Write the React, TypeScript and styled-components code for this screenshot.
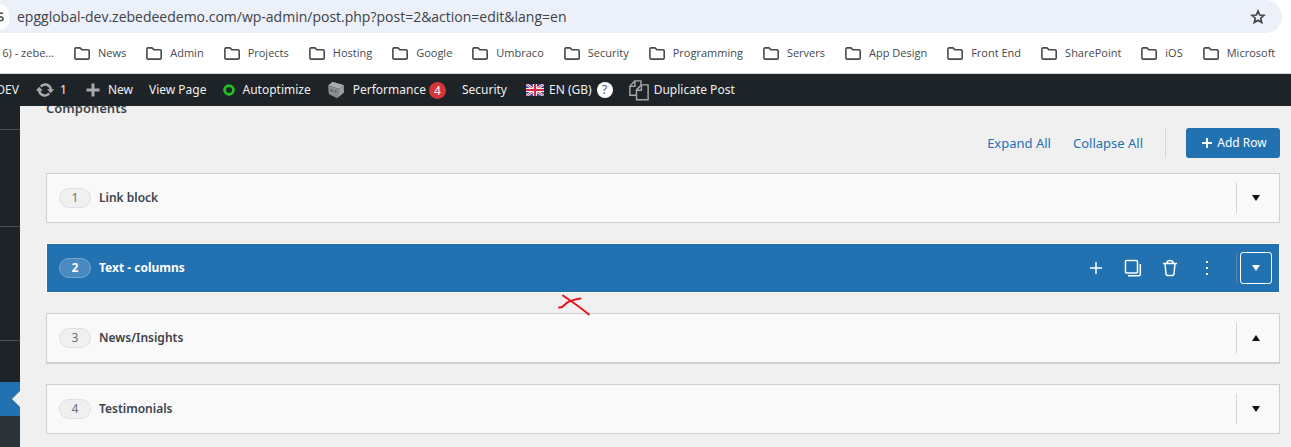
import React from "react";
import styled, { createGlobalStyle, css } from "styled-components";

const GlobalStyle = createGlobalStyle`
  * { box-sizing: border-box; }
  body {
    margin: 0;
    background: #f0f0f1;
    color: #3c434a;
    font-family: "Noto Sans", "Open Sans", "Liberation Sans", sans-serif;
    font-size: 12px;
    line-height: 20px;
  }
  button {
    font: inherit;
    color: inherit;
    background: none;
    border: 0;
    padding: 0;
    cursor: pointer;
  }
  a { color: inherit; text-decoration: none; }
  svg { display: block; flex: none; }
`;

const Page = styled.div`
  display: flex;
  flex-direction: column;
  min-height: 100vh;
  overflow: hidden;
`;

/* Browser chrome */

const AddressRow = styled.div`
  background: #fff;
  padding-right: 9px;
`;

const AddressBar = styled.div`
  display: flex;
  align-items: center;
  height: 33px;
  padding-right: 16px;
  background: #ebf0f9;
  border-radius: 0 17px 17px 0;
`;

const SiteInfo = styled.button`
  flex: none;
  width: 9px;
  height: 26px;
  background: #fff;
  border-radius: 0 13px 13px 0;
  color: #44474b;
`;

const UrlInput = styled.input`
  flex: 1;
  min-width: 0;
  margin-left: 8px;
  padding: 0;
  border: 0;
  outline: 0;
  background: transparent;
  color: #3f4247;
  font-family: "Open Sans", "Noto Sans", sans-serif;
  font-size: 14px;
`;

const Bookmarks = styled.nav`
  display: flex;
  align-items: center;
  gap: 20px;
  height: 41px;
  background: #fff;
  border-bottom: 1px solid #d5d7da;
  color: #46494d;
  font-family: "Open Sans", "Noto Sans", sans-serif;
  font-size: 11px;
  white-space: nowrap;
`;

const Bookmark = styled.a`
  display: flex;
  flex: none;
  align-items: center;
  gap: 8px;
`;

const ClippedBookmark = styled(Bookmark)`
  justify-content: flex-end;
  width: 54px;
`;

/* WordPress admin bar */

const AdminBar = styled.nav`
  display: flex;
  align-items: center;
  gap: 16px;
  height: 32px;
  background: #1d2327;
  color: #f0f0f1;
  white-space: nowrap;
`;

const AdminItem = styled.a<{ $gap?: number; $before?: number }>`
  display: flex;
  flex: none;
  align-items: center;
  gap: ${(p) => p.$gap ?? 8}px;
  margin-left: ${(p) => p.$before ?? 0}px;
`;

const ClippedAdminItem = styled(AdminItem)`
  justify-content: flex-end;
  width: 19px;
`;

const Labelled = styled.span`
  display: flex;
  align-items: center;
  gap: 3px;
`;

const Count = styled.span`
  width: 17px;
  height: 17px;
  border-radius: 9px;
  background: #d63638;
  color: #fff;
  line-height: 17px;
  text-align: center;
`;

const Help = styled.span`
  width: 16px;
  height: 16px;
  border-radius: 8px;
  background: #fff;
  color: #50575e;
  line-height: 16px;
  text-align: center;
`;

/* Body */

const Body = styled.div`
  display: flex;
  flex: 1;
  overflow: hidden;
`;

const Sidebar = styled.aside`
  display: flex;
  flex: none;
  flex-direction: column;
  width: 20px;
  background: #1d2327;
`;

const MenuGroup = styled.div<{ $height: number; $last?: boolean }>`
  height: ${(p) => p.$height}px;
  border-bottom: ${(p) => (p.$last ? "0" : "1px solid #4a5055")};
`;

const CurrentMenu = styled.div`
  display: flex;
  align-items: center;
  justify-content: flex-end;
  height: 34px;
  background: #2271b1;
`;

const Notch = styled.span`
  border: 8px solid transparent;
  border-left-width: 0;
  border-right-color: #f0f0f1;
`;

const SubMenu = styled.div`
  flex: 1;
  background: #2c3338;
`;

const Main = styled.main`
  flex: 1;
  min-width: 0;
  padding: 0 11px 13px 26px;
`;

const FieldLabel = styled.h2`
  margin: -8px 0 10px;
  font-size: 13px;
  font-weight: 600;
  line-height: 20px;
`;

const Actions = styled.div`
  display: flex;
  align-items: center;
  justify-content: flex-end;
  height: 30px;
  margin-bottom: 15px;
`;

const LinkButton = styled.button`
  margin-right: 22px;
  color: #2271b1;
  font-size: 13px;
`;

const Divider = styled.span<{ $dim?: boolean }>`
  flex: none;
  width: 1px;
  height: 30px;
  background: ${(p) => (p.$dim ? "#4b8bc1" : "#d5d6d9")};
`;

const AddButton = styled.button`
  display: flex;
  align-items: center;
  justify-content: center;
  gap: 5px;
  width: 94px;
  height: 30px;
  margin-left: 20px;
  padding-left: 3px;
  border-radius: 3px;
  background: #2271b1;
  color: #fff;
`;

const Rows = styled.div`
  display: flex;
  flex-direction: column;
  gap: 20px;
`;

const Row = styled.section<{ $active?: boolean; $open?: boolean }>`
  display: flex;
  align-items: center;
  height: 50px;
  padding: 0 7px 0 12px;
  border: 1px solid #ccd0d4;
  background: #f9f9f9;
  ${(p) =>
    p.$open &&
    css`
      height: 51px;
      border-bottom-width: 2px;
    `}
  ${(p) =>
    p.$active &&
    css`
      border-color: #fafcfe;
      background: #2271b1;
      color: #fff;
    `}
`;

const Index = styled.span<{ $active?: boolean }>`
  flex: none;
  width: 32px;
  height: 20px;
  margin-right: 8px;
  border: 1px solid ${(p) => (p.$active ? "#78a9d1" : "#dfe0e3")};
  border-radius: 10px;
  background: ${(p) => (p.$active ? "#4a8ac0" : "#f0f0f1")};
  color: ${(p) => (p.$active ? "#fff" : "#6b7076")};
  font-weight: ${(p) => (p.$active ? 700 : 400)};
  line-height: 18px;
  text-align: center;
`;

const RowTitle = styled.h3<{ $active?: boolean }>`
  flex: 1;
  margin: 0;
  font-size: 12px;
  font-weight: ${(p) => (p.$active ? 700 : 600)};
`;

const RowTools = styled.div`
  display: flex;
  gap: 5px;
  margin-right: 13px;
`;

const IconButton = styled.button<{ $boxed?: boolean }>`
  display: flex;
  flex: none;
  align-items: center;
  justify-content: center;
  width: 32px;
  height: 32px;
  border: 1px solid ${(p) => (p.$boxed ? "#fff" : "transparent")};
  border-radius: 3px;
`;

const ToggleSlot = styled.div`
  display: flex;
  flex: none;
  align-items: center;
  gap: 3px;
`;

const Canvas = styled.div`
  position: relative;
`;

const PenMark = styled.svg`
  position: absolute;
  left: 511px;
  top: 121px;
`;

const FolderIcon = () => (
  <svg width="16" height="13" viewBox="0 0 16 13" fill="none" stroke="#46494d" strokeWidth="1.6" strokeLinejoin="round">
    <path d="M.9 2.1Q.9.9 2.1.9H6L8 2.8h6q1.2 0 1.2 1.2v6.900q0 1.200-1.200 1.200H2.100Q.9 12.100.9 10.900Z" />
  </svg>
);

const StarIcon = () => (
  <svg width="16" height="16" viewBox="0 0 16 16" fill="none" stroke="#44474b" strokeWidth="1.7">
    <path d="M8 2.100 9.700 6l4.200.4-3.200 2.800 1 4.200L8 11.200l-3.700 2.200 1-4.200L2.100 6.400 6.300 6Z" />
  </svg>
);

const UpdateIcon = () => (
  <svg width="20" height="20" viewBox="0 0 20 20" fill="#a7aaad">
    <path d="M10.200 3.280c3.530 0 6.430 2.610 6.920 6h2.080l-3.500 4-3.500-4h2.320c-.45-1.970-2.210-3.450-4.320-3.450-1.450 0-2.730.71-3.540 1.780L4.950 5.660C6.230 4.200 8.110 3.280 10.200 3.280zm-.4 13.440c-3.520 0-6.430-2.610-6.920-6H.8l3.500-4c1.170 1.330 2.330 2.670 3.500 4H5.480c.45 1.970 2.210 3.450 4.320 3.450 1.450 0 2.730-.71 3.540-1.780l1.710 1.950c-1.280 1.460-3.150 2.380-5.250 2.380z" />
  </svg>
);

const NewIcon = () => (
  <svg width="14" height="14" viewBox="0 0 14 14" fill="#a7aaad">
    <path d="M5.500 0.500h3v5h5v3h-5v5h-3v-5h-5v-3h5z" />
  </svg>
);

const RingIcon = () => (
  <svg width="12" height="12" viewBox="0 0 12 12" fill="none" stroke="#1fc41f" strokeWidth="2.800">
    <circle cx="6" cy="6" r="4.400" />
  </svg>
);

const CubeIcon = () => (
  <svg width="18" height="18" viewBox="0 0 18 18">
    <path d="M5.500.8 16.800 4 12.200 8 1.200 4.600Z" fill="#a9acae" />
    <path d="M1.200 4.600 12.200 8 10.200 17.200 1.800 13Z" fill="#8b8e91" />
    <path d="M16.800 4 17 11.500 10.200 17.200 12.200 8Z" fill="#9b9ea1" />
    <path d="m3.500 8 .8 2.200 1-1.500.8 2.300M8 9.200l1.400.6-1.200 1 1 .9" stroke="#4c5155" strokeWidth=".8" fill="none" />
  </svg>
);

const FlagIcon = () => (
  <svg width="18" height="12" viewBox="0 0 18 12">
    <path d="M0 0h18v12H0z" fill="#3b4da0" />
    <path d="m0 0 18 12M18 0 0 12" stroke="#f3e9ef" strokeWidth="2.600" />
    <path d="m0 0 18 12M18 0 0 12" stroke="#d8465a" strokeWidth="1" />
    <path d="M9 0v12M0 6h18" stroke="#f8f3f6" strokeWidth="4" />
    <path d="M9 0v12M0 6h18" stroke="#d42a45" strokeWidth="2.200" />
  </svg>
);

const DuplicatePostIcon = () => (
  <svg width="20" height="21" viewBox="0 0 20 21" fill="none" stroke="#a7aaad" strokeWidth="1.400">
    <path d="M7.200 15.300H.9V6.200L5.700.9h6.200v3.500" />
    <path d="M5.900 1v5.400H1" />
    <path d="M12.200 4.900h6.900v14.800H7.500V9.900Z" />
    <path d="M12.400 5v5.200H7.700" />
  </svg>
);

const PlusIcon = ({ size, width }: { size: number; width: number }) => (
  <svg width={size} height={size} viewBox={`0 0 ${size} ${size}`} stroke="#fff" strokeWidth={width}>
    <path d={`M${size / 2} 0V${size}M0 ${size / 2}H${size}`} />
  </svg>
);

const CopyIcon = () => (
  <svg width="18" height="18" viewBox="0 0 18 18" fill="none" stroke="#fff" strokeWidth="1.500">
    <rect x="1.500" y="1.500" width="12" height="12.500" rx="1" />
    <path d="M16.300 5v10.200q0 1.500-1.500 1.500H4" />
  </svg>
);

const TrashIcon = () => (
  <svg width="16" height="18" viewBox="0 0 16 18" fill="none" stroke="#fff" strokeWidth="1.500">
    <path d="M1 4.500h14M4.800 4.500Q4.800 1.500 8 1.500t3.200 3M3 4.500l1 10.300q.2 1.600 1.600 1.600h4.800q1.400 0 1.600-1.600L13 4.500" />
  </svg>
);

const MoreIcon = () => (
  <svg width="4" height="16" viewBox="0 0 4 16" fill="#fff">
    <path d="M1 1h2v2H1zM1 7h2v2H1zM1 13h2v2H1z" />
  </svg>
);

const Caret = ({ up, color }: { up?: boolean; color: string }) => (
  <svg width="8" height="6" viewBox="0 0 8 6" fill={color}>
    <path d={up ? "M0 6 4 0l4 6Z" : "M0 0h8L4 6Z"} />
  </svg>
);

const folders = [
  "News", "Admin", "Projects", "Hosting", "Google", "Umbraco", "Security",
  "Programming", "Servers", "App Design", "Front End", "SharePoint", "iOS", "Microsoft",
];

const rows = [
  { title: "Link block" },
  { title: "Text - columns", active: true },
  { title: "News/Insights", open: true },
  { title: "Testimonials" },
];

export default function App() {
  return (
    <Page>
      <GlobalStyle />
      <AddressRow>
        <AddressBar>
          <SiteInfo aria-label="Site information">
            <svg width="4" height="10" viewBox="0 0 4 10" fill="none" stroke="currentColor" strokeWidth="1.500">
              <path d="M0 1.200h3M0 4.800q3 0 3 2T0 8.800" />
            </svg>
          </SiteInfo>
          <UrlInput
            aria-label="Address"
            defaultValue="epgglobal-dev.zebedeedemo.com/wp-admin/post.php?post=2&action=edit&lang=en"
          />
          <button aria-label="Bookmark this page"><StarIcon /></button>
        </AddressBar>
      </AddressRow>
      <Bookmarks aria-label="Bookmarks">
        <ClippedBookmark href="#">6) - zebe...</ClippedBookmark>
        {folders.map((name) => (
          <Bookmark href="#" key={name}><FolderIcon />{name}</Bookmark>
        ))}
      </Bookmarks>
      <AdminBar aria-label="Admin bar">
        <ClippedAdminItem href="#">DEV</ClippedAdminItem>
        <AdminItem href="#" $gap={5}><UpdateIcon />1</AdminItem>
        <AdminItem href="#" $before={3}><NewIcon />New</AdminItem>
        <AdminItem href="#">View Page</AdminItem>
        <AdminItem href="#"><RingIcon />Autoptimize</AdminItem>
        <AdminItem href="#">
          <CubeIcon />
          <Labelled>Performance<Count>4</Count></Labelled>
        </AdminItem>
        <AdminItem href="#">Security</AdminItem>
        <AdminItem href="#" $gap={5} $before={3}><FlagIcon />EN (GB)<Help>?</Help></AdminItem>
        <AdminItem href="#" $gap={5}><DuplicatePostIcon />Duplicate Post</AdminItem>
      </AdminBar>
      <Body>
        <Sidebar>
          <MenuGroup $height={24} />
          <MenuGroup $height={97} />
          <MenuGroup $height={114} />
          <MenuGroup $height={41} $last />
          <CurrentMenu><Notch /></CurrentMenu>
          <SubMenu />
        </Sidebar>
        <Main>
          <FieldLabel>Components</FieldLabel>
          <Actions>
            <LinkButton>Expand All</LinkButton>
            <LinkButton>Collapse All</LinkButton>
            <Divider />
            <AddButton><PlusIcon size={10} width={2} />Add Row</AddButton>
          </Actions>
          <Canvas>
            <Rows>
              {rows.map(({ title, active, open }, i) => (
                <Row key={title} $active={active} $open={open}>
                  <Index $active={active}>{i + 1}</Index>
                  <RowTitle $active={active}>{title}</RowTitle>
                  {active && (
                    <RowTools>
                      <IconButton aria-label="Add row"><PlusIcon size={12} width={1.5} /></IconButton>
                      <IconButton aria-label="Duplicate row"><CopyIcon /></IconButton>
                      <IconButton aria-label="Remove row"><TrashIcon /></IconButton>
                      <IconButton aria-label="More actions"><MoreIcon /></IconButton>
                    </RowTools>
                  )}
                  <ToggleSlot>
                    <Divider $dim={active} />
                    <IconButton $boxed={active} aria-label="Toggle row">
                      <Caret up={open} color={active ? "#fff" : "#10131a"} />
                    </IconButton>
                  </ToggleSlot>
                </Row>
              ))}
            </Rows>
            <PenMark width="34" height="24" viewBox="0 0 34 24" fill="none" stroke="#e8121c" strokeWidth="2" strokeLinecap="round">
              <path d="M2 13.500Q5 14 8 10.500q3-4 15.500-6M6 1.500 11 5q9 6 21 15.500" />
            </PenMark>
          </Canvas>
        </Main>
      </Body>
    </Page>
  );
}
